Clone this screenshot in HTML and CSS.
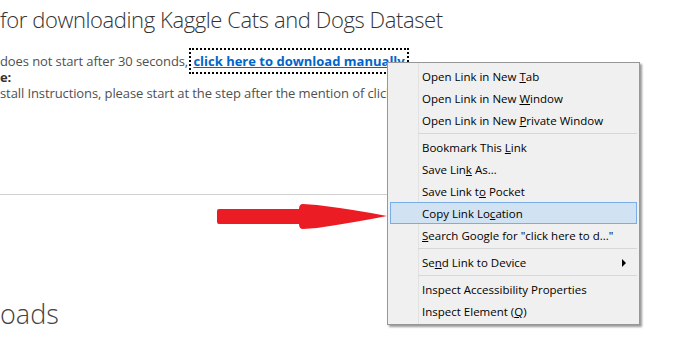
FILE: index.html
```html
<!DOCTYPE html>
<html lang="en">
<head>
  <meta charset="UTF-8">
  <title>Kaggle Cats and Dogs Dataset</title>
  <link rel="stylesheet" href="styles.css">
</head>
<body>

  <main class="page">
    <h1 class="title">for downloading Kaggle Cats and Dogs Dataset</h1>
    <p class="note first">does not start after 30 seconds, <a href="#" class="manual">click here to download manually</a></p>
    <p class="note strong">e:</p>
    <p class="note">stall Instructions, please start at the step after the mention of clicking the download link.</p>
    <hr class="rule">
    <h2 class="section">oads</h2>
  </main>

  <!-- red pointer arrow -->
  <svg class="pointer" width="171" height="26" viewBox="0 0 171 26">
    <path d="M0,7 Q0,5 2,5 L82,5 Q82,0 86,0 L100,1 Q140,6 170,12 Q140,18 100,24 L86,25 Q82,25 82,20 L2,20 Q0,20 0,18 Z" fill="#ec1c24"/>
  </svg>

  <!-- context menu -->
  <ul class="menu">
    <li>Open Link in New <u>T</u>ab</li>
    <li>Open Link in New <u>W</u>indow</li>
    <li>Open Link in New <u>P</u>rivate Window</li>
    <li class="sep"></li>
    <li>Bookmark This <u>L</u>ink</li>
    <li>Save Lin<u>k</u> As&hellip;</li>
    <li>Save Link t<u>o</u> Pocket</li>
    <li class="active">Copy Link Lo<u>c</u>ation</li>
    <li><u>S</u>earch Google for "click here to d..."</li>
    <li class="sep"></li>
    <li class="sub">Se<u>n</u>d Link to Device</li>
    <li class="sep"></li>
    <li>Inspect Accessibility Properties</li>
    <li>Inspect Element (<u>Q</u>)</li>
  </ul>

</body>
</html>
```

FILE: styles.css
```css
* {
  margin: 0;
  padding: 0;
  box-sizing: border-box;
}

body, html {
  height: 100%;
  background: #fff;
  font-family: 'Open Sans', sans-serif;
  overflow: hidden;
}

.page {
  padding-top: 4px;
  color: #505050;
}

.title {
  font-size: 22px;
  font-weight: 300;
  letter-spacing: -0.4px;
  color: #333;
  line-height: 30px;
  white-space: nowrap;
}

.note {
  font-size: 13px;
  line-height: 16px;
  letter-spacing: -0.1px;
  white-space: nowrap;
}

.note.first {
  margin-top: 19px;
}

.strong {
  font-weight: bold;
  color: #333;
}

.manual {
  color: #0066cc;
  font-weight: bold;
  letter-spacing: 0;
  outline: 2px dotted #000;
  outline-offset: 2px;
  margin-left: 2px;
}

.rule {
  border: none;
  border-top: 1px solid #d0d0d0;
  width: 600px;
  margin-top: 93px;
}

.section {
  font-size: 27px;
  font-weight: 300;
  color: #444;
  margin-top: 102px;
  line-height: 34px;
}

.pointer {
  position: absolute;
  left: 217px;
  top: 204px;
}

.menu {
  position: absolute;
  left: 387px;
  top: 62px;
  width: 253px;
  list-style: none;
  background: #f0f0f0 linear-gradient(to right, transparent 30px, #e2e2e2 30px, #e2e2e2 31px, transparent 31px);
  border: 1px solid #979797;
  box-shadow: 2px 2px 2px rgba(0, 0, 0, 0.4);
  padding: 2px 0;
  font-size: 11.5px;
  color: #000;
}

.menu li {
  height: 22px;
  line-height: 21px;
  padding-left: 31px;
  margin: 0 2px;
  border: 1px solid transparent;
  white-space: nowrap;
  position: relative;
}

.menu li.active {
  background: #d1e2f2;
  border-color: #78aee5;
}

.menu li.sep {
  height: 5px;
  border: none;
  margin: 0 2px 0 30px;
  padding: 0;
  background: linear-gradient(#d7d7d7, #d7d7d7) 0 2px / 100% 1px no-repeat;
}

.menu li.sub::after {
  content: "";
  position: absolute;
  right: 10px;
  top: 7px;
  border-left: 4px solid #000;
  border-top: 4px solid transparent;
  border-bottom: 4px solid transparent;
}
```
